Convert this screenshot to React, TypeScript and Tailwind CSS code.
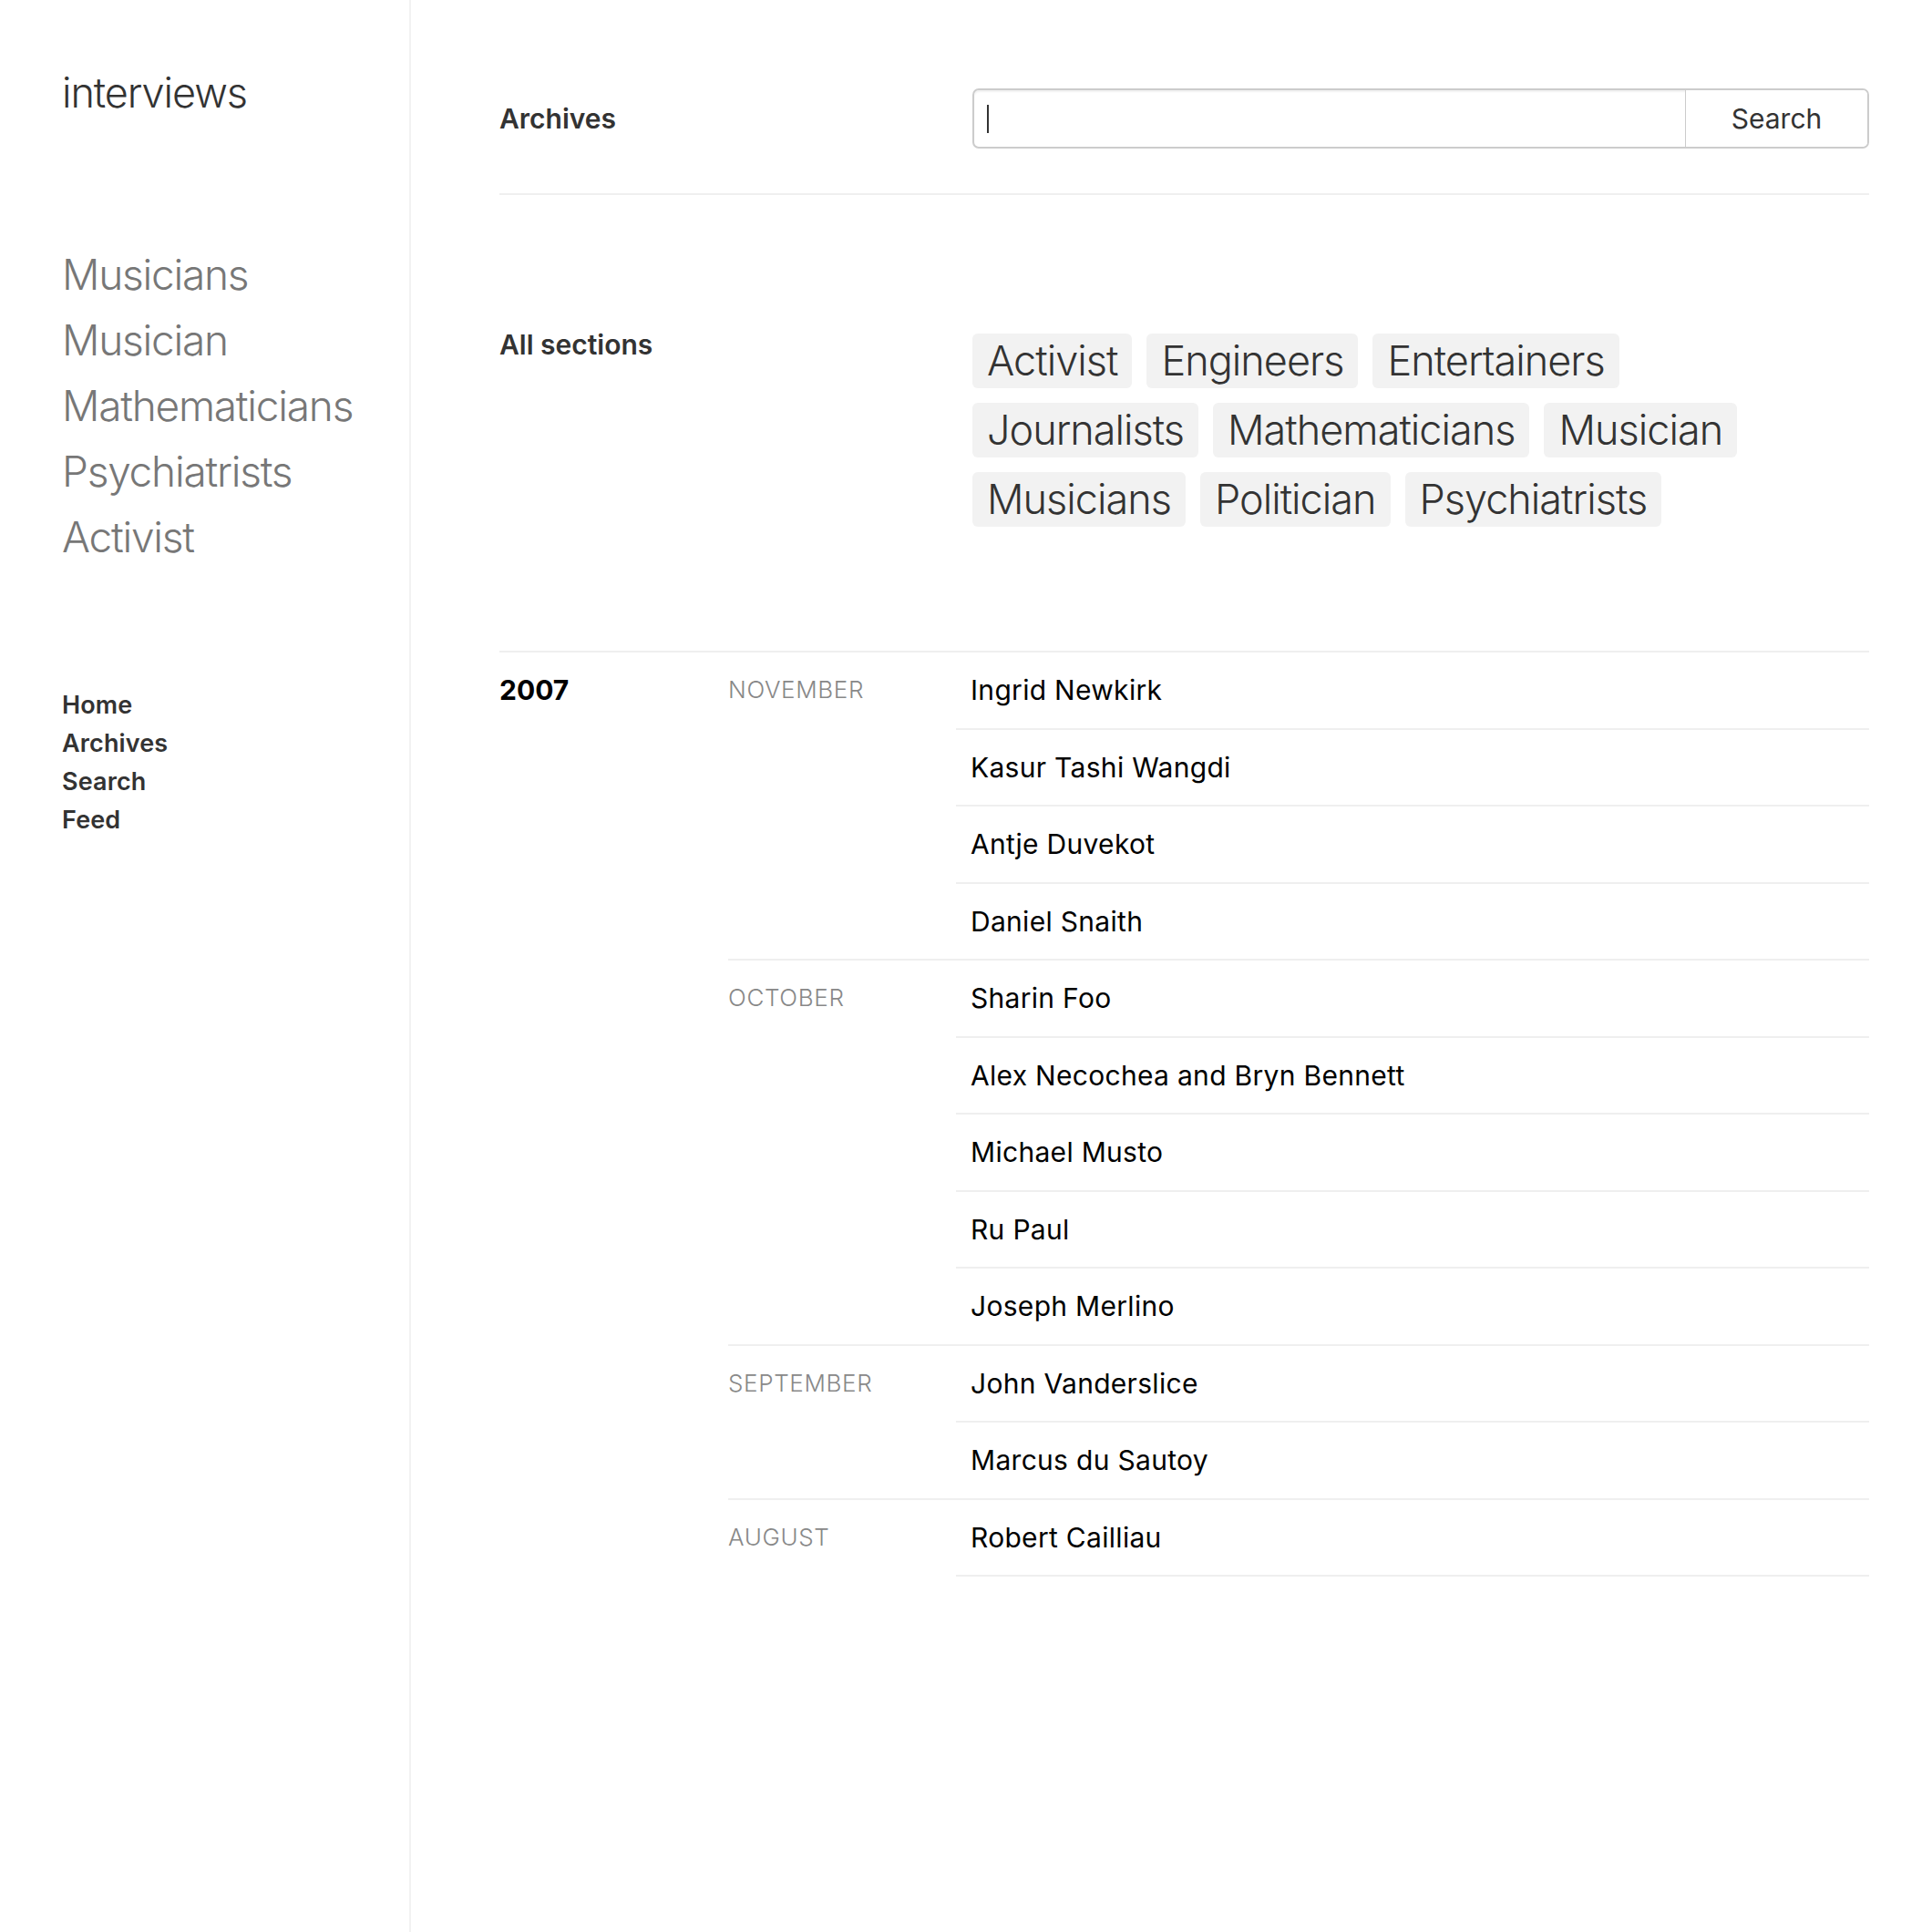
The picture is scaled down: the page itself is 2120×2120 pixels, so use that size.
import { useState } from "react";

type Grupo = {
  mes: string;
  nombres: string[];
};

const secciones = ["Musicians", "Musician", "Mathematicians", "Psychiatrists", "Activist"];
const navLinks = ["Home", "Archives", "Search", "Feed"];

const etiquetas = [
  "Activist",
  "Engineers",
  "Entertainers",
  "Journalists",
  "Mathematicians",
  "Musician",
  "Musicians",
  "Politician",
  "Psychiatrists",
];

const grupos: Grupo[] = [
  {
    mes: "November",
    nombres: ["Ingrid Newkirk", "Kasur Tashi Wangdi", "Antje Duvekot", "Daniel Snaith"],
  },
  {
    mes: "October",
    nombres: [
      "Sharin Foo",
      "Alex Necochea and Bryn Bennett",
      "Michael Musto",
      "Ru Paul",
      "Joseph Merlino",
    ],
  },
  {
    mes: "September",
    nombres: ["John Vanderslice", "Marcus du Sautoy"],
  },
  {
    mes: "August",
    nombres: ["Robert Cailliau"],
  },
];

export default function App() {
  const [busqueda, setBusqueda] = useState("");

  return (
    <div className="flex min-h-[2120px] bg-white font-['Inter','Liberation_Sans',sans-serif]">
      {/* Barra lateral */}
      <aside className="w-[451px] shrink-0 border-r-2 border-[#f2f2f2] pl-[68px] pt-[75px]">
        <div className="text-[45px] leading-[54px] font-light tracking-[-0.024em] text-[#333]">interviews</div>

        <ul className="mt-[136px]">
          {secciones.map((s) => (
            <li key={s} className="text-[46px] leading-[72px] font-light tracking-[-0.027em] text-[#777]">
              {s}
            </li>
          ))}
        </ul>

        <ul className="mt-[128px]">
          {navLinks.map((n) => (
            <li key={n} className="text-[27px] leading-[42px] font-semibold tracking-[0.005em] text-[#333]">
              {n}
            </li>
          ))}
        </ul>
      </aside>

      {/* Contenido principal */}
      <main className="flex-1 pl-[97px] pr-[69px]">
        {/* Cabecera con buscador */}
        <div className="flex items-center border-b-2 border-[#efefef] pt-[97px] pb-[49px]">
          <div className="w-[519px] text-[30px] leading-[36px] font-semibold text-[#333]">Archives</div>
          <div className="relative flex h-[66px] flex-1 overflow-hidden rounded-[7px] border-2 border-[#cccccc] shadow-[inset_0_2px_2px_rgba(0,0,0,0.06)]">
            <input
              autoFocus
              value={busqueda}
              onChange={(e) => setBusqueda(e.target.value)}
              className="flex-1 bg-transparent px-[14px] text-[30px] text-[#333] caret-[#333] outline-none"
            />
            {busqueda === "" && (
              <span className="pointer-events-none absolute left-[14px] top-[16px] h-[31px] w-[2px] bg-[#333]" />
            )}
            <button className="w-[200px] border-l border-[#cccccc] bg-white text-[30px] text-[#333]">
              Search
            </button>
          </div>
        </div>

        {/* Todas las secciones */}
        <div className="flex pt-[146px] pb-[136px]">
          <div className="w-[519px] shrink-0 text-[30px] leading-[36px] font-semibold text-[#333]">
            All sections
          </div>
          <div className="mt-[6px] flex flex-1 flex-wrap gap-4 pr-[24px]">
            {etiquetas.map((t) => (
              <span
                key={t}
                className="flex h-[60px] items-center rounded-[6px] bg-[#f2f2f2] px-4 text-[45px] font-light tracking-[-0.022em] text-[#333]"
              >
                {t}
              </span>
            ))}
          </div>
        </div>

        {/* Listado por año y mes */}
        <div className="flex border-t-2 border-[#efefef]">
          <div className="w-[251px] shrink-0 py-[23px] text-[30px] leading-[36.5px] font-bold text-black">2007</div>
          <div className="flex-1">
            {grupos.map((g, gi) => {
              const ultimoGrupo = gi === grupos.length - 1;
              return (
                <div
                  key={g.mes}
                  className={ultimoGrupo ? "flex" : "flex border-b-2 border-[#efefef]"}
                >
                  <div className="w-[250px] shrink-0 py-[23px] text-[26px] leading-[36.5px] font-light uppercase tracking-[0.025em] text-[#888]">
                    {g.mes}
                  </div>
                  <div className="flex-1">
                    {g.nombres.map((n, i) => {
                      const conBorde = i < g.nombres.length - 1 || ultimoGrupo;
                      return (
                        <div
                          key={n}
                          className={
                            conBorde
                              ? "border-b-2 border-[#efefef] py-[23px] pl-4 text-[30px] leading-[36.5px] tracking-[0.01em] text-black"
                              : "py-[23px] pl-4 text-[30px] leading-[36.5px] tracking-[0.01em] text-black"
                          }
                        >
                          {n}
                        </div>
                      );
                    })}
                  </div>
                </div>
              );
            })}
          </div>
        </div>
      </main>
    </div>
  );
}
